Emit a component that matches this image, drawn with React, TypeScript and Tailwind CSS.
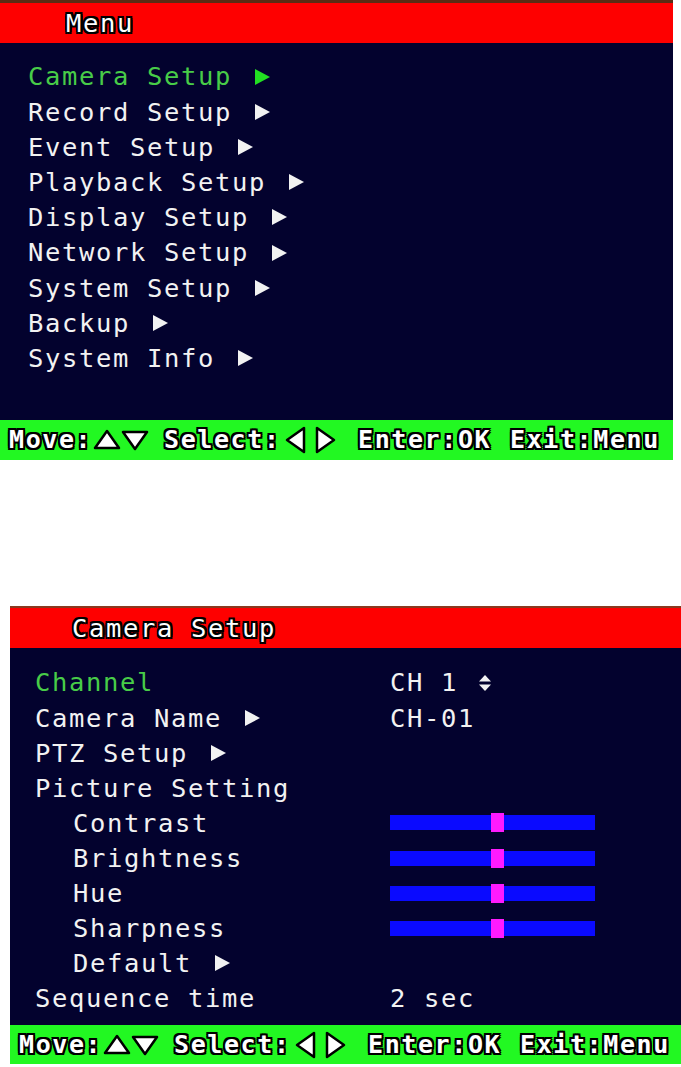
const outline =
  "[text-shadow:-2px_0_0_#000,2px_0_0_#000,0_-2px_0_#000,0_2px_0_#000,-2px_-2px_0_#000,2px_2px_0_#000,-2px_2px_0_#000,2px_-2px_0_#000]";

function Arrow({ color = "#f2f2f2" }: { color?: string }) {
  return (
    <svg width="17" height="18" viewBox="0 0 17 18" className="ml-[22px] shrink-0">
      <polygon points="1,1 16,9 1,17" fill={color} />
    </svg>
  );
}

function UpDown() {
  return (
    <svg width="14" height="18" viewBox="0 0 14 18" className="ml-[20px]">
      <polygon points="7,1 13,7.5 1,7.5" fill="#f2f2f2" />
      <polygon points="1,10.5 13,10.5 7,17" fill="#f2f2f2" />
    </svg>
  );
}

function Slider() {
  return (
    <div className="relative w-[205px] h-[15px] bg-[#0a0aff]">
      <div className="absolute left-[101px] -top-[2px] w-[13px] h-[19px] bg-[#ff1aff]" />
    </div>
  );
}

function StatusBar({ h }: { h: string }) {
  const txt = `font-['DejaVu_Sans_Mono',monospace] font-bold text-[25px] tracking-[1.6px] text-white ${outline}`;
  return (
    <div className={`${h} bg-[#22f822] flex items-center pl-[9px] whitespace-nowrap`}>
      <span className={`${txt} w-[83px]`}>Move:</span>
      <svg width="72" height="24" viewBox="0 0 72 24" className="shrink-0">
        <polygon points="15,3 27,20 3,20" fill="#fff" stroke="#000" strokeWidth="2.5" strokeLinejoin="round" />
        <polygon points="31,4 55,4 43,21" fill="#fff" stroke="#000" strokeWidth="2.5" strokeLinejoin="round" />
      </svg>
      <span className={`${txt} w-[120px]`}>Select:</span>
      <svg width="74" height="28" viewBox="0 0 74 28" className="shrink-0">
        <polygon points="20,2 20,26 3,14" fill="#fff" stroke="#000" strokeWidth="2.5" strokeLinejoin="round" />
        <polygon points="33,2 33,26 50,14" fill="#fff" stroke="#000" strokeWidth="2.5" strokeLinejoin="round" />
      </svg>
      <span className={`${txt} w-[152px]`}>Enter:OK</span>
      <span className={txt}>Exit:Menu</span>
    </div>
  );
}

const mainItems = [
  "Camera Setup",
  "Record Setup",
  "Event Setup",
  "Playback Setup",
  "Display Setup",
  "Network Setup",
  "System Setup",
  "Backup",
  "System Info",
];

export default function App() {
  const item = "font-['DejaVu_Sans_Mono',monospace] text-[25.5px] tracking-[1.65px] whitespace-nowrap";
  return (
    <div className="w-[681px] h-[1067px] bg-white overflow-hidden">
      {/* main menu */}
      <div className="w-[673px] bg-[#03022e]">
        <div className="h-[3px] bg-[#5a2c14]" />
        <div className="h-[40px] bg-[#fe0000] flex items-center pl-[66px]">
          <span className={`${item} text-white ${outline}`}>Menu</span>
        </div>
        <div className="h-[377px] pt-[16px] pl-[28px]">
          {mainItems.map((name, i) => (
            <div key={name} className="h-[35.2px] flex items-center">
              <span className={`${item} ${i === 0 ? "text-[#48cc48]" : "text-[#f2f2f2]"}`}>{name}</span>
              <Arrow color={i === 0 ? "#22e022" : "#f2f2f2"} />
            </div>
          ))}
        </div>
        <StatusBar h="h-[40px]" />
      </div>

      <div className="h-[146px]" />

      {/* camera setup */}
      <div className="ml-[10px] w-[671px] bg-[#03022e]">
        <div className="h-[42px] bg-[#fe0000] border-t-2 border-[#8a3a20] flex items-center pl-[62px]">
          <span className={`${item} text-white ${outline}`}>Camera Setup</span>
        </div>
        <div className="h-[377px] pt-[17px] pl-[25px] text-[#f2f2f2]">
          <div className="h-[35.1px] flex items-center">
            <div className="w-[355px]"><span className={`${item} text-[#48cc48]`}>Channel</span></div>
            <span className={item}>CH 1</span>
            <UpDown />
          </div>
          <div className="h-[35.1px] flex items-center">
            <div className="w-[355px] flex items-center"><span className={item}>Camera Name</span><Arrow /></div>
            <span className={item}>CH-01</span>
          </div>
          <div className="h-[35.1px] flex items-center">
            <div className="w-[355px] flex items-center"><span className={item}>PTZ Setup</span><Arrow /></div>
          </div>
          <div className="h-[35.1px] flex items-center">
            <span className={item}>Picture Setting</span>
          </div>
          {["Contrast", "Brightness", "Hue", "Sharpness"].map((n) => (
            <div key={n} className="h-[35.1px] flex items-center">
              <div className="w-[355px] pl-[38px]"><span className={item}>{n}</span></div>
              <Slider />
            </div>
          ))}
          <div className="h-[35.1px] flex items-center pl-[38px]">
            <span className={item}>Default</span>
            <Arrow />
          </div>
          <div className="h-[35.1px] flex items-center">
            <div className="w-[355px]"><span className={item}>Sequence time</span></div>
            <span className={item}>2 sec</span>
          </div>
        </div>
        <StatusBar h="h-[39px]" />
      </div>
    </div>
  );
}
